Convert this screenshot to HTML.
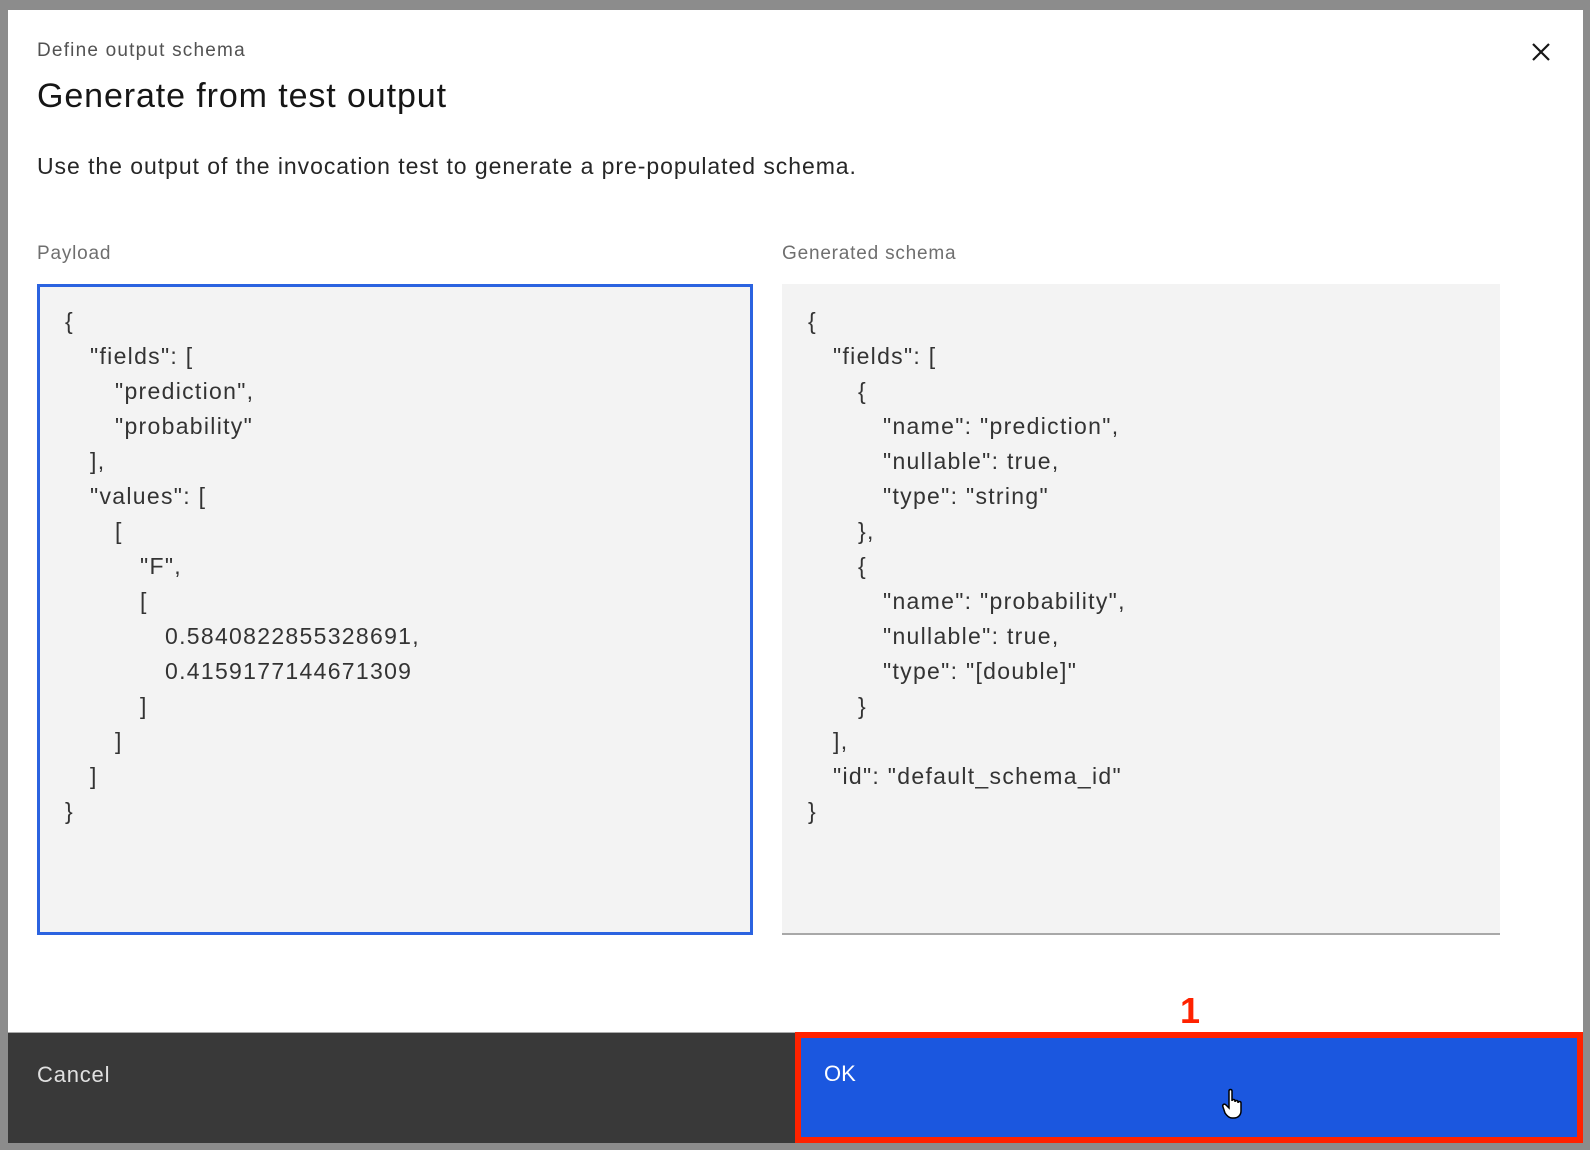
<!DOCTYPE html>
<html><head><meta charset="utf-8"><style>
*{margin:0;padding:0;box-sizing:border-box}
html,body{width:1590px;height:1150px;overflow:hidden;background:#8c8c8c;font-family:"Liberation Sans",sans-serif}
.modal{position:absolute;left:8px;top:10px;width:1575px;height:1133px;background:#fff}
.abs{position:absolute;white-space:nowrap}
.sub{left:29px;top:30px;font-size:19px;color:#525252;letter-spacing:1.2px}
.title{left:29px;top:67px;font-size:34px;color:#161616;letter-spacing:0.9px}
.desc{left:29px;top:143px;font-size:23px;color:#262626;letter-spacing:0.95px}
.lbl{font-size:19px;color:#6f6f6f;top:233px;letter-spacing:0.8px}
.box{position:absolute;top:274px;height:651px;background:#f3f3f3}
.pay{left:29px;width:716px;border:3px solid #2b63e0}
.sch{left:774px;width:718px;border-bottom:2px solid #a8a8a8}
.code{position:absolute;font-size:23px;color:#333;line-height:35px;white-space:pre;letter-spacing:1.3px}
.foot{position:absolute;left:0;top:1022px;height:111px}
.cancel{width:787px;background:#393939;color:#e0e0e0;font-size:22px;border-top:1px solid #aaa}
.ok{left:787px;width:788px;background:#1b57df;border:6px solid #ff2200;color:#fff;font-size:22px}
</style></head><body>
<div class="modal">
<div class="abs sub">Define output schema</div>
<div class="abs title">Generate from test output</div>
<svg class="abs" style="left:1524px;top:33px" width="18" height="18" viewBox="0 0 18 18"><path d="M1 1L17 17M17 1L1 17" stroke="#161616" stroke-width="2.2"/></svg>
<div class="abs desc">Use the output of the invocation test to generate a pre-populated schema.</div>
<div class="abs lbl" style="left:29px">Payload</div>
<div class="abs lbl" style="left:774px">Generated schema</div>
<div class="box pay"><div class="code" style="left:25px;top:17px"><div>{</div><div style="padding-left:25px">"fields": [</div><div style="padding-left:50px">"prediction",</div><div style="padding-left:50px">"probability"</div><div style="padding-left:25px">],</div><div style="padding-left:25px">"values": [</div><div style="padding-left:50px">[</div><div style="padding-left:75px">"F",</div><div style="padding-left:75px">[</div><div style="padding-left:100px">0.5840822855328691,</div><div style="padding-left:100px">0.4159177144671309</div><div style="padding-left:75px">]</div><div style="padding-left:50px">]</div><div style="padding-left:25px">]</div><div>}</div></div></div>
<div class="box sch"><div class="code" style="left:26px;top:20px"><div>{</div><div style="padding-left:25px">"fields": [</div><div style="padding-left:50px">{</div><div style="padding-left:75px">"name": "prediction",</div><div style="padding-left:75px">"nullable": true,</div><div style="padding-left:75px">"type": "string"</div><div style="padding-left:50px">},</div><div style="padding-left:50px">{</div><div style="padding-left:75px">"name": "probability",</div><div style="padding-left:75px">"nullable": true,</div><div style="padding-left:75px">"type": "[double]"</div><div style="padding-left:50px">}</div><div style="padding-left:25px">],</div><div style="padding-left:25px">"id": "default_schema_id"</div><div>}</div></div></div>
<div class="abs" style="left:1172px;top:980px;font-size:36px;font-weight:bold;color:#ff2200">1</div>
<div class="foot cancel"><span class="abs" style="left:29px;top:29px;letter-spacing:0.8px">Cancel</span></div>
<div class="foot ok"><span class="abs" style="left:23px;top:23px">OK</span>
<svg class="abs" style="left:420px;top:50px" width="26" height="32" viewBox="0 0 26 32"><path d="M8 3c0-2 3-2 3 0v10c0-2 3-2 3 0v1c0-2 3-2 3 0v1c0-2 3-2 3 0v8c0 4-3 7-7 7h-2c-3 0-5-2-7-5L2 19c-1-2 1-4 3-2l3 3z" fill="#fff" stroke="#000" stroke-width="1.5"/></svg>
</div>
</div>
</body></html>
